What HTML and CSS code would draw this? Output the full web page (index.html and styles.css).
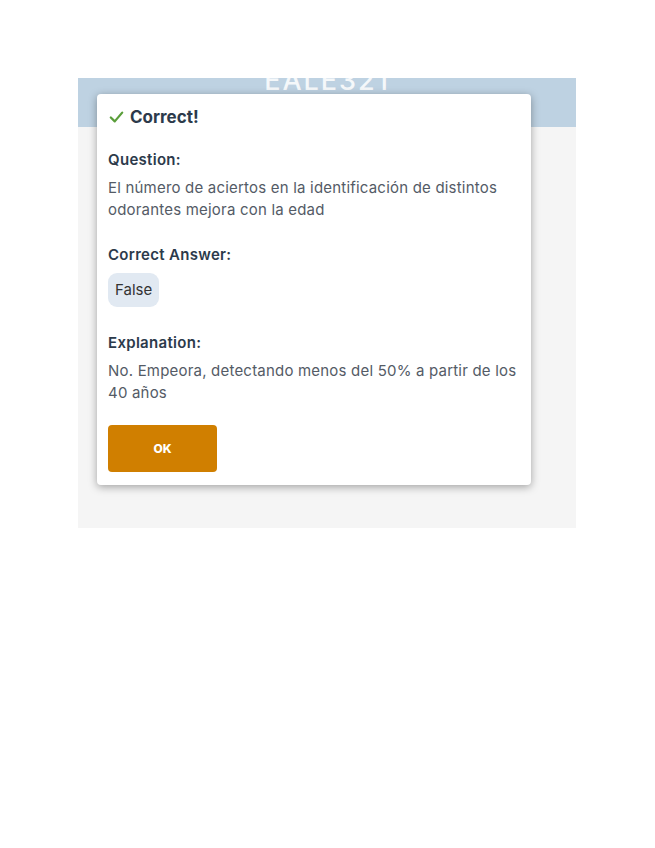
FILE: index.html
```html
<!DOCTYPE html>
<html lang="es">
<head>
    <meta charset="UTF-8">
    <meta name="viewport" content="width=device-width, initial-scale=1.0">
    <title>Quiz</title>
    <link rel="stylesheet" href="styles.css">
</head>
<body>
    <div class="panel">
        <div class="panel-header">
            <span class="panel-title">EALE321</span>
        </div>
        <div class="panel-body"></div>

        <!-- result dialog on top of the quiz -->
        <div class="dialog">
            <h2 class="dialog-title">
                <svg class="check" viewBox="0 0 16 16" width="17" height="14">
                    <path d="M1.5 8.5 L6 13 L14.5 3" fill="none" stroke="#5a9e3a" stroke-width="2.6" stroke-linecap="round" stroke-linejoin="round"/>
                </svg>
                Correct!
            </h2>

            <div class="section">
                <h3>Question:</h3>
                <p>El número de aciertos en la identificación de distintos odorantes mejora con la edad</p>
            </div>

            <div class="section">
                <h3>Correct Answer:</h3>
                <span class="chip">False</span>
            </div>

            <div class="section">
                <h3>Explanation:</h3>
                <p>No. Empeora, detectando menos del 50% a partir de los 40 años</p>
            </div>

            <button class="ok-btn">OK</button>
        </div>
    </div>
</body>
</html>
```

FILE: styles.css
```css
body {
    margin: 0;
    font-family: Inter, "Noto Sans", sans-serif;
    background: #ffffff;
}

.panel {
    position: relative;
    width: 498px;
    height: 450px;
    margin: 78px 0 0 78px;
    background: #f5f5f5;
    display: flex;
    flex-direction: column;
}

.panel-header {
    height: 49px;
    background: #bed2e2;
    overflow: hidden;
    text-align: center;
}

.panel-title {
    display: block;
    margin-top: -12px;
    line-height: 30px;
    font-size: 27px;
    font-weight: 500;
    letter-spacing: 2px;
    color: #ffffff;
    opacity: 0.85;
}

.dialog {
    position: absolute;
    left: 19px;
    top: 16px;
    width: 434px;
    height: 391px;
    box-sizing: border-box;
    padding: 12px 11px;
    background: #ffffff;
    border-radius: 4px;
    box-shadow: 0 2px 8px rgba(0, 0, 0, 0.35);
    color: #2c3a4b;
}

.dialog-title {
    display: flex;
    align-items: center;
    gap: 5px;
    height: 22px;
    margin: 0 0 22px 0;
    font-size: 17px;
    font-weight: 700;
}

.section {
    display: flex;
    flex-direction: column;
    align-items: flex-start;
    margin-bottom: 24px;
}

.section h3 {
    margin: 0 0 7px 0;
    line-height: 20px;
    font-size: 15px;
    font-weight: 600;
    letter-spacing: 0.3px;
}

.section p {
    margin: 0;
    font-size: 15px;
    line-height: 22px;
    letter-spacing: 0.2px;
    color: #545b66;
}

.chip {
    margin-top: 1px;
    padding: 0 7px;
    line-height: 34px;
    border-radius: 9px;
    background: #e1e9f2;
    font-size: 15px;
    color: #333;
}

.section:nth-of-type(2) {
    margin-bottom: 26px;
}

.section:nth-of-type(3) {
    margin-bottom: 21px;
}

.ok-btn {
    display: block;
    width: 109px;
    height: 47px;
    border: none;
    border-radius: 4px;
    background: #d07f00;
    color: #ffffff;
    font-family: inherit;
    font-size: 12px;
    font-weight: 800;
}
```
